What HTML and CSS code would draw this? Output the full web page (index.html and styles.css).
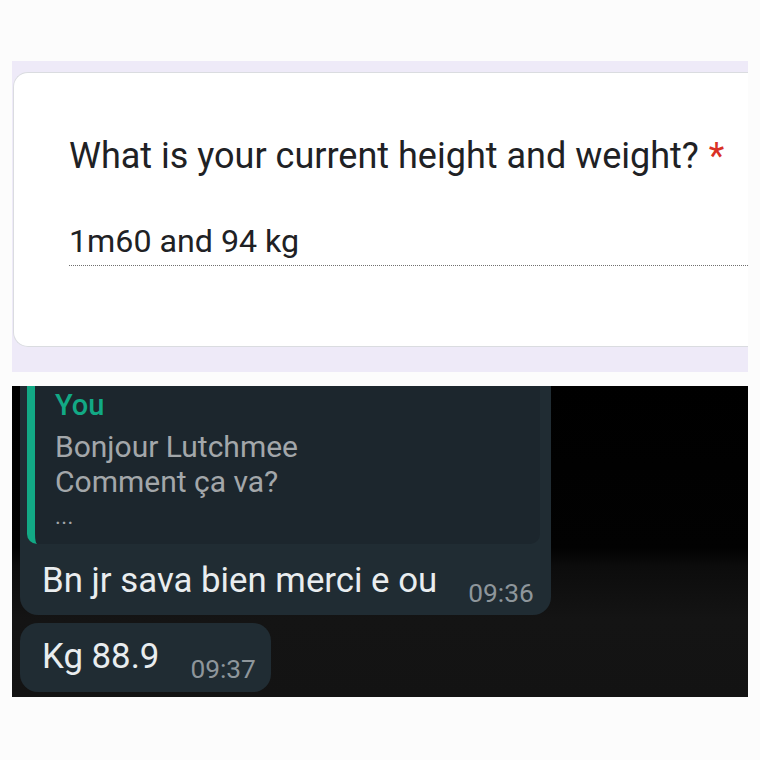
FILE: index.html
```html
<!DOCTYPE html>
<html lang="en">
<head>
<meta charset="utf-8">
<title>Height and weight</title>
<link rel="stylesheet" href="styles.css">
</head>
<body>
<main class="page">
  <section class="form-band">
    <div class="card">
      <div class="question">What is your current height and weight? <span class="req">*</span></div>
      <div class="answer">1m60 and 94 kg</div>
    </div>
  </section>
  <section class="chat">
    <div class="bubble bubble-reply">
      <div class="quote">
        <div class="quote-author">You</div>
        <div class="quote-line">Bonjour Lutchmee</div>
        <div class="quote-line">Comment ça va?</div>
        <div class="quote-line quote-more">...</div>
      </div>
      <div class="msg-row">
        <span class="msg">Bn jr sava bien merci e ou</span>
        <span class="time">09:36</span>
      </div>
    </div>
    <div class="bubble bubble-short">
      <div class="msg-row">
        <span class="msg">Kg 88.9</span>
        <span class="time">09:37</span>
      </div>
    </div>
  </section>
</main>
</body>
</html>
```
FILE: styles.css
```css
* { box-sizing: border-box; }
html, body { margin: 0; padding: 0; }
body {
  background: #fcfcfc;
  font-family: Roboto, "Noto Sans", Arial, sans-serif;
  width: 760px;
  height: 760px;
  overflow: hidden;
}
.page {
  padding: 61px 12px 0 12px;
  display: flex;
  flex-direction: column;
  gap: 14px;
}
.form-band {
  background: #eeeaf8;
  height: 311px;
  padding: 11px 0 25px 1px;
}
.card {
  background: #ffffff;
  height: 275px;
  border: 1px solid #dadce0;
  border-right: none;
  border-radius: 15px 0 0 15px;
  padding: 62px 0 0 55px;
}
.question {
  font-size: 36px;
  line-height: 42px;
  color: #202124;
  white-space: nowrap;
}
.req { color: #d93025; margin-left: 1px; }
.answer {
  margin-top: 45px;
  font-size: 32.2px;
  line-height: 38px;
  color: #202124;
  padding-bottom: 5px;
  border-bottom: 1px dotted #707070;
}
.chat {
  height: 311px;
  overflow: hidden;
  padding-left: 8px;
  background: linear-gradient(to bottom, #000 0, #020202 52%, #0c0c0c 58%, #141414 75%, #131313 100%);
  display: flex;
  flex-direction: column;
  gap: 8px;
}
.bubble {
  background: #202c33;
  color: #e9edef;
}
.bubble-reply {
  width: 531px;
  border-radius: 0 0 18px 18px;
  padding: 0 11px 7px 7px;
}
.quote {
  background: #1c262d;
  border-left: 8px solid #12a985;
  border-radius: 0 0 10px 10px;
  padding: 1px 0 10px 20px;
}
.quote-author {
  font-size: 29px;
  line-height: 36px;
  font-weight: 500;
  color: #12a985;
  margin-bottom: 6px;
}
.quote-line {
  font-size: 30px;
  line-height: 35px;
  color: #a3a7aa;
}
.quote-more {
  font-size: 22px;
  letter-spacing: 0.5px;
}
.msg-row {
  display: flex;
  align-items: flex-end;
}
.bubble-reply .msg-row {
  margin-top: 16px;
  padding-left: 15px;
  gap: 31px;
}
.msg {
  font-size: 34.8px;
  line-height: 40px;
  margin-bottom: 8px;
  white-space: nowrap;
}
.time {
  font-size: 26.3px;
  line-height: 30px;
  color: #8e969b;
  white-space: nowrap;
}
.bubble-short {
  align-self: flex-start;
  border-radius: 18px;
  padding: 13px 15px 8px 22px;
}
.bubble-short .msg-row { gap: 31px; }
```
